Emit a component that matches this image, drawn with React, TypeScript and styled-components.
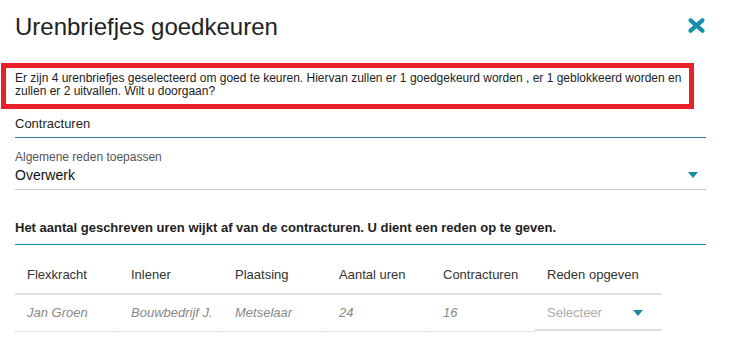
import React from "react";
import styled, { createGlobalStyle } from "styled-components";

const GlobalStyle = createGlobalStyle`
  body {
    margin: 0;
    background: #fff;
    font-family: "Liberation Sans", Arial, sans-serif;
    color: #222;
  }
`;

const Page = styled("div")`
  padding: 13px 25px 0 15px;
`;

const Header = styled("div")`
  display: flex;
  justify-content: space-between;
  align-items: flex-start;
`;

const Title = styled("h1")`
  margin: 0;
  font-size: 24px;
  line-height: 28px;
  font-weight: normal;
  color: #222;
`;

const CloseButton = styled("button")`
  margin: 5px 1px 0 0;
  padding: 0;
  border: 0;
  background: none;
  width: 17px;
  height: 15px;
  display: flex;
  cursor: pointer;
`;

const Notice = styled("div")`
  box-sizing: border-box;
  width: 693px;
  margin: 22px 0 0 -14px;
  border: 5px solid #e8202a;
  padding: 4px 4px 6px 9px;
  font-size: 12px;
  line-height: 13px;
  color: #222;
`;

const SectionTitle = styled("div")<{ $strong?: boolean; $gap: number }>`
  margin-top: ${(p) => p.$gap}px;
  padding-bottom: ${(p) => (p.$strong ? 9 : 6)}px;
  border-bottom: 1px solid ${(p) => (p.$strong ? "#1a8fab" : "#2a8098")};
  font-size: 13px;
  line-height: 15px;
  font-weight: ${(p) => (p.$strong ? "bold" : "normal")};
  color: #1e1e1e;
`;

const Field = styled("div")`
  margin-top: 12px;
`;

const FieldLabel = styled("div")`
  font-size: 12px;
  line-height: 14px;
  color: #555;
`;

const SelectBox = styled("div")`
  display: flex;
  align-items: center;
  justify-content: space-between;
  margin-top: 3px;
  padding: 0 8px 6px 0;
  border-bottom: 1px solid #c8c8c8;
  font-size: 14px;
  line-height: 16px;
  color: #111;
`;

const Caret = styled("span")`
  width: 0;
  height: 0;
  border-left: 5.5px solid transparent;
  border-right: 5.5px solid transparent;
  border-top: 6px solid #1a8aa8;
`;

const Table = styled("table")`
  width: 647px;
  border-collapse: collapse;
  table-layout: fixed;
`;

const HeadCell = styled("th")<{ $w?: number }>`
  box-sizing: border-box;
  width: ${(p) => (p.$w ? `${p.$w}px` : "auto")};
  padding: 22px 12px 11px;
  border-bottom: 2px solid #e0e0e0;
  text-align: left;
  font-size: 13px;
  line-height: 15px;
  font-weight: normal;
  color: #333;
  white-space: nowrap;
`;

const Cell = styled("td")`
  box-sizing: border-box;
  padding: 10px 12px;
  border-bottom: 1px dotted #cfcfcf;
  font-size: 13px;
  line-height: 15px;
  font-style: italic;
  color: #888;
  white-space: nowrap;
`;

const SelectCell = styled("td")`
  padding: 0;
  vertical-align: bottom;
`;

const RowSelect = styled("div")`
  display: flex;
  align-items: center;
  justify-content: space-between;
  padding: 10px 19px 9px 12px;
  border-bottom: 2px solid #dcdcdc;
  font-size: 13px;
  line-height: 15px;
  color: #aaa;
`;

const columns = [
  { label: "Flexkracht", w: 104 },
  { label: "Inlener", w: 104 },
  { label: "Plaatsing", w: 104 },
  { label: "Aantal uren", w: 104 },
  { label: "Contracturen", w: 104 },
  { label: "Reden opgeven" },
];

const rows = [
  {
    flexkracht: "Jan Groen",
    inlener: "Bouwbedrijf J.",
    plaatsing: "Metselaar",
    uren: "24",
    contract: "16",
  },
];

export default function App() {
  return (
    <>
      <GlobalStyle />
      <Page>
        <Header>
          <Title>Urenbriefjes goedkeuren</Title>
          <CloseButton aria-label="Sluiten">
            <svg width="17" height="15" viewBox="0 0 17 15">
              <path
                d="M2.6 2.3 L14.4 12.7 M14.4 2.3 L2.6 12.7"
                stroke="#1490ad"
                strokeWidth="4.2"
                strokeLinecap="round"
                fill="none"
              />
            </svg>
          </CloseButton>
        </Header>

        <Notice>
          Er zijn 4 urenbriefjes geselecteerd om goed te keuren. Hiervan zullen
          er 1 goedgekeurd worden , er 1 geblokkeerd worden en zullen er 2
          uitvallen. Wilt u doorgaan?
        </Notice>

        <SectionTitle $gap={7}>Contracturen</SectionTitle>
        <Field>
          <FieldLabel>Algemene reden toepassen</FieldLabel>
          <SelectBox>
            <span>Overwerk</span>
            <Caret />
          </SelectBox>
        </Field>

        <SectionTitle $strong $gap={30}>
          Het aantal geschreven uren wijkt af van de contracturen. U dient een
          reden op te geven.
        </SectionTitle>

        <Table>
          <thead>
            <tr>
              {columns.map((c) => (
                <HeadCell key={c.label} $w={c.w}>
                  {c.label}
                </HeadCell>
              ))}
            </tr>
          </thead>
          <tbody>
            {rows.map((r) => (
              <tr key={r.flexkracht}>
                <Cell>{r.flexkracht}</Cell>
                <Cell>{r.inlener}</Cell>
                <Cell>{r.plaatsing}</Cell>
                <Cell>{r.uren}</Cell>
                <Cell>{r.contract}</Cell>
                <SelectCell>
                  <RowSelect>
                    <span>Selecteer</span>
                    <Caret />
                  </RowSelect>
                </SelectCell>
              </tr>
            ))}
          </tbody>
        </Table>
      </Page>
    </>
  );
}
